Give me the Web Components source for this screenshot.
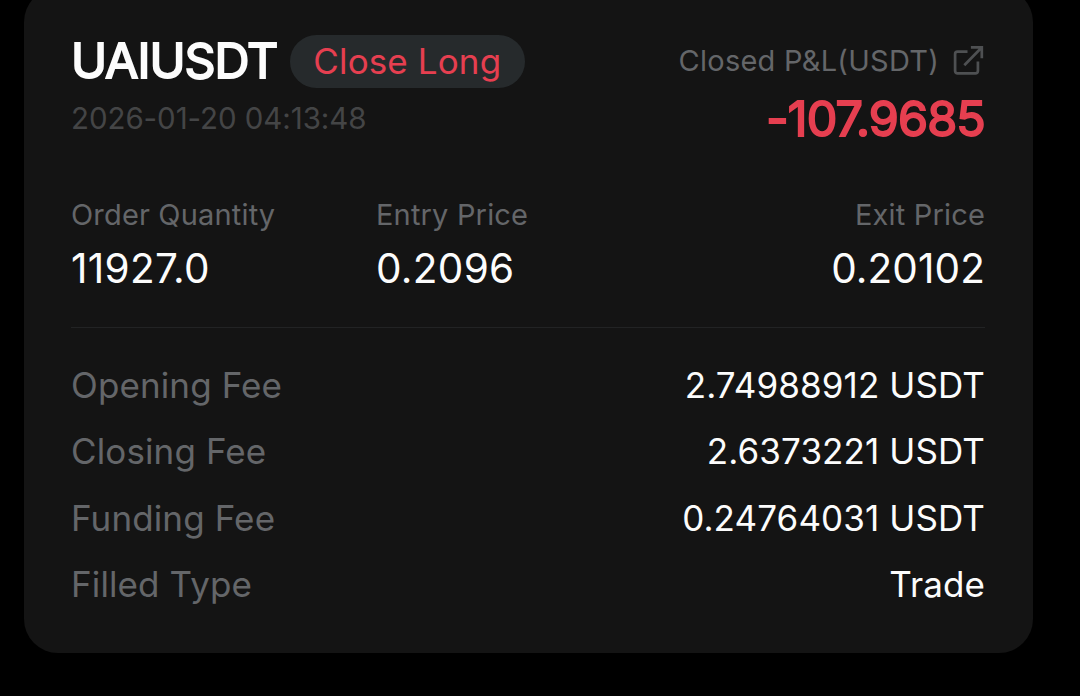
<!DOCTYPE html>
<html lang="en">
<head>
<meta charset="utf-8">
<title>Closed P&amp;L</title>
<style>
  html, body {
    margin: 0;
    height: 100%;
    overflow: hidden;
    background: #000;
  }
  body {
    font-family: Inter, "Liberation Sans", sans-serif;
    --card: #141414;
    --line: #222324;
    --white: #fcfcfc;
    --label: #646669;
    --muted: #444546;
    --red: #e63f50;
    --badge: #262a2c;
  }
</style>
</head>
<body>
<position-card>
  <position-head slot="head" symbol="UAIUSDT" side="Close Long" time="2026-01-20 04:13:48" pnl="-107.9685">Closed P&amp;L(USDT)</position-head>
  <price-cell slot="prices" label="Order Quantity">11927.0</price-cell>
  <price-cell slot="prices" label="Entry Price">0.2096</price-cell>
  <price-cell slot="prices" label="Exit Price" align="end">0.20102</price-cell>
  <fee-row label="Opening Fee">2.74988912 USDT</fee-row>
  <fee-row label="Closing Fee">2.6373221 USDT</fee-row>
  <fee-row label="Funding Fee">0.24764031 USDT</fee-row>
  <fee-row label="Filled Type">Trade</fee-row>
</position-card>

<script>
const cardTemplate = document.createElement('template');
cardTemplate.innerHTML = `
  <style>
    :host {
      display: block;
      box-sizing: border-box;
      width: 1009px;
      height: 665px;
      margin: -12px 0 0 24px;
      padding: 47px 48px 0 47px;
      border-radius: 34px;
      background: var(--card);
    }
    .prices {
      display: grid;
      grid-template-columns: 305px 1fr auto;
      margin-top: 43px;
      padding-bottom: 33px;
      border-bottom: 1px solid var(--line);
    }
    .rows {
      display: grid;
      grid-auto-rows: 66.4px;
      margin-top: 23.9px;
    }
  </style>
  <slot name="head"></slot>
  <div class="prices"><slot name="prices"></slot></div>
  <div class="rows"><slot></slot></div>
`;

class PositionCard extends HTMLElement {
  constructor() {
    super();
    this.attachShadow({ mode: 'open' });
    this.shadowRoot.appendChild(cardTemplate.content.cloneNode(true));
  }
}
window.customElements.define('position-card', PositionCard);

const shareTemplate = document.createElement('template');
shareTemplate.innerHTML = `
  <style>
    :host { display: block; width: 32px; height: 32px; color: #4e5052; }
    svg { display: block; }
  </style>
  <svg width="32" height="32" viewBox="0 0 32 32" fill="none" stroke="currentColor" stroke-width="2.7">
    <path d="M14.5 7.6H4.5a2.4 2.4 0 0 0-2.4 2.4v17a2.4 2.4 0 0 0 2.4 2.4h18a2.4 2.4 0 0 0 2.4-2.4V17.6"/>
    <path d="M17.9 3.3h10.9v11M28.4 3.7L11.3 21.2"/>
  </svg>
`;

class ShareIcon extends HTMLElement {
  constructor() {
    super();
    this.attachShadow({ mode: 'open' });
    this.shadowRoot.appendChild(shareTemplate.content.cloneNode(true));
  }
}
window.customElements.define('share-icon', ShareIcon);

const headTemplate = document.createElement('template');
headTemplate.innerHTML = `
  <style>
    :host { display: flex; justify-content: space-between; white-space: nowrap; }
    .top { display: flex; align-items: center; height: 53px; }
    /* regular weight thickened with a stroke keeps the glyphs narrow */
    .symbol, .pnl {
      font-size: 48.5px;
      font-weight: 400;
      -webkit-text-stroke: 1.9px currentColor;
    }
    .symbol {
      color: var(--white);
      line-height: 52px;
      letter-spacing: -1.05px;
      margin: -2px 12.5px 0 0;
    }
    .side {
      box-sizing: border-box;
      height: 53px;
      padding: 0 23.5px;
      border-radius: 27px;
      background: var(--badge);
      color: var(--red);
      font-size: 35px;
      line-height: 53px;
      letter-spacing: 0.12px;
    }
    .time {
      color: var(--muted);
      font-size: 29.5px;
      line-height: 60px;
      letter-spacing: -0.07px;
    }
    .right { text-align: right; }
    .right .top { justify-content: flex-end; height: 50px; gap: 14px; }
    .label { color: var(--label); font-size: 29px; letter-spacing: 0.25px; }
    .pnl {
      color: var(--red);
      line-height: 68px;
      letter-spacing: -0.85px;
    }
  </style>
  <div>
    <div class="top"><span class="symbol"></span><span class="side"></span></div>
    <div class="time"></div>
  </div>
  <div class="right">
    <div class="top"><span class="label"><slot></slot></span><share-icon></share-icon></div>
    <div class="pnl"></div>
  </div>
`;

class PositionHead extends HTMLElement {
  constructor() {
    super();
    this.attachShadow({ mode: 'open' });
    this.shadowRoot.appendChild(headTemplate.content.cloneNode(true));
    for (const name of ['symbol', 'side', 'time', 'pnl']) {
      this.shadowRoot.querySelector('.' + name).textContent = this.getAttribute(name);
    }
  }
}
window.customElements.define('position-head', PositionHead);

const priceTemplate = document.createElement('template');
priceTemplate.innerHTML = `
  <style>
    :host { display: block; white-space: nowrap; }
    :host([align="end"]) { text-align: right; }
    .label {
      color: var(--label);
      font-size: 29px;
      line-height: 38px;
      letter-spacing: 0.17px;
    }
    .value {
      color: var(--white);
      font-size: 40.5px;
      line-height: 50px;
      margin-top: 10px;
      letter-spacing: 0.3px;
    }
    :host([align="end"]) .value { letter-spacing: 0.1px; }
  </style>
  <div class="label"></div>
  <div class="value"><slot></slot></div>
`;

class PriceCell extends HTMLElement {
  constructor() {
    super();
    this.attachShadow({ mode: 'open' });
    this.shadowRoot.appendChild(priceTemplate.content.cloneNode(true));
    this.shadowRoot.querySelector('.label').textContent = this.getAttribute('label');
  }
}
window.customElements.define('price-cell', PriceCell);

const rowTemplate = document.createElement('template');
rowTemplate.innerHTML = `
  <style>
    :host {
      display: flex;
      justify-content: space-between;
      align-items: center;
      font-size: 35px;
      white-space: nowrap;
    }
    .label { color: var(--label); letter-spacing: 0.12px; }
    .value { color: var(--white); letter-spacing: 0.1px; }
  </style>
  <span class="label"></span>
  <span class="value"><slot></slot></span>
`;

class FeeRow extends HTMLElement {
  constructor() {
    super();
    this.attachShadow({ mode: 'open' });
    this.shadowRoot.appendChild(rowTemplate.content.cloneNode(true));
    this.shadowRoot.querySelector('.label').textContent = this.getAttribute('label');
  }
}
window.customElements.define('fee-row', FeeRow);
</script>
</body>
</html>
